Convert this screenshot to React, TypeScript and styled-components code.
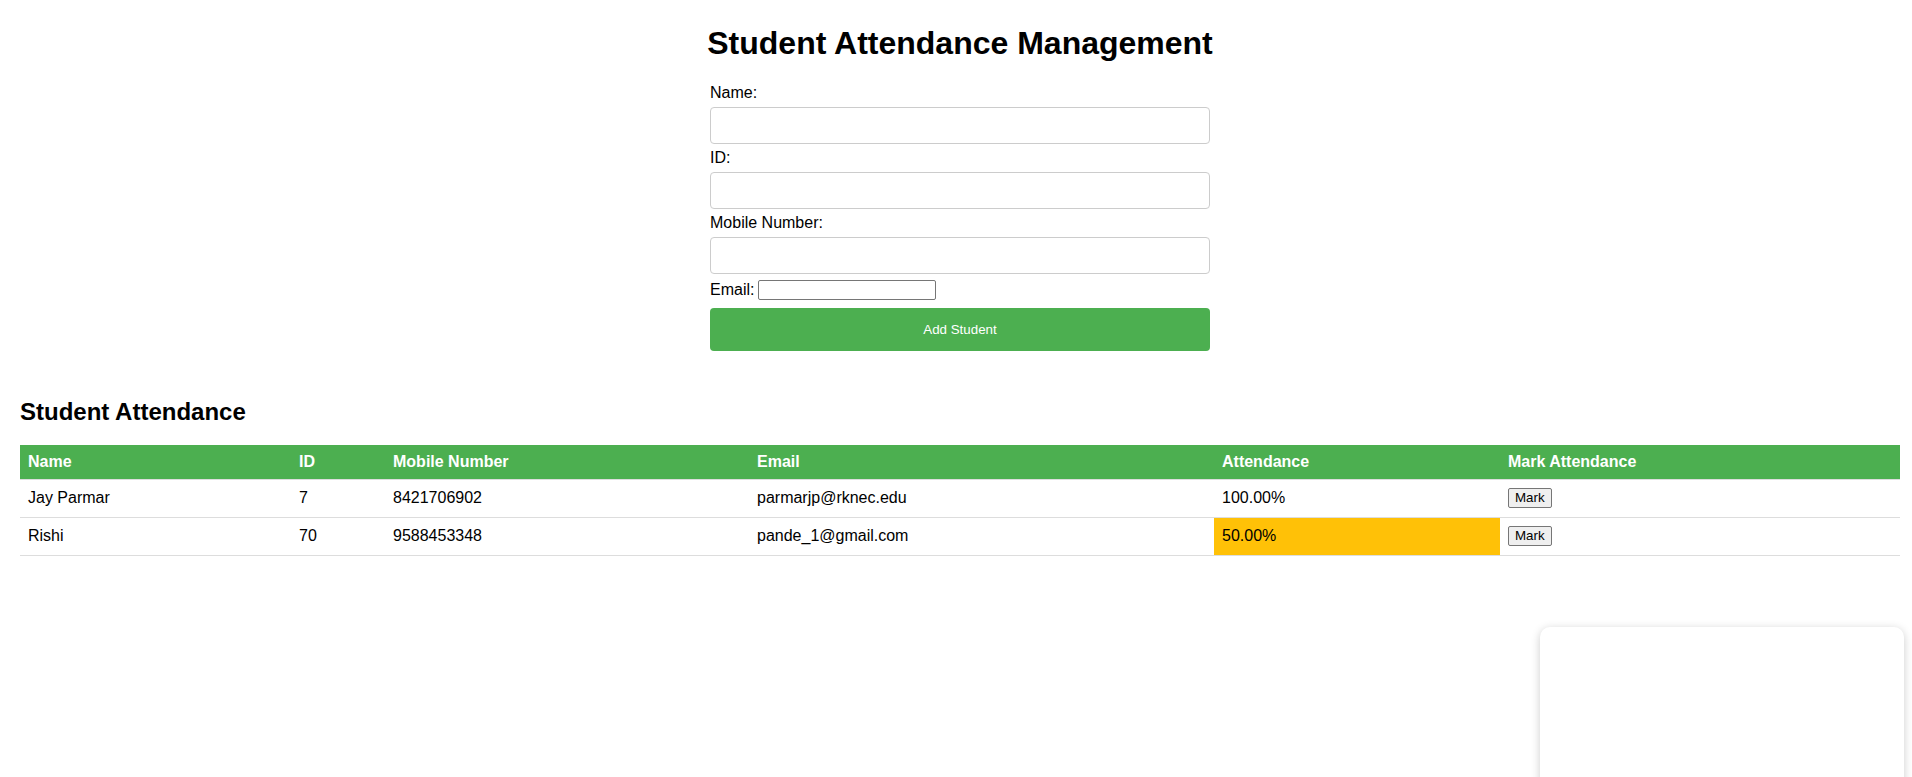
import React from "react";
import styled, { createGlobalStyle } from "styled-components";

const GlobalStyle = createGlobalStyle`
  html, body {
    margin: 0;
    padding: 0;
    overflow: hidden;
    background: #ffffff;
  }
  body {
    font-family: "Liberation Sans", Arial, sans-serif;
    color: #000;
  }
`;

const Page = styled.div`
  width: 1920px;
  box-sizing: border-box;
  padding: 0 20px;
`;

const Title = styled.h1`
  margin: 24.5px 0 22px;
  text-align: center;
  font-size: 32px;
  font-weight: bold;
  line-height: normal;
`;

const Form = styled.form`
  width: 500px;
  margin: 0 auto;
`;

const Label = styled.label`
  display: block;
  font-size: 16px;
  line-height: normal;
`;

const TextInput = styled.input`
  display: block;
  width: 100%;
  box-sizing: border-box;
  margin: 5px 0;
  padding: 10px;
  border: 1px solid #ccc;
  border-radius: 4px;
  font-family: "Liberation Sans", Arial, sans-serif;
  font-size: 13.333px;
  line-height: normal;
  background: #fff;
`;

const InlineRow = styled.div`
  font-size: 16px;
  line-height: normal;
  display: flex;
  align-items: center;
  gap: 4px;
  height: 22px;
`;

const SmallInput = styled.input`
  width: 178px;
  height: 20px;
  box-sizing: border-box;
  padding: 1px 2px;
  border: 1px solid #767676;
  border-radius: 2px;
  font-family: "Liberation Sans", Arial, sans-serif;
  font-size: 13.333px;
  background: #fff;
`;

const SubmitButton = styled.button`
  display: block;
  width: 100%;
  margin: 7px 0 0;
  padding: 14px 20px;
  border: none;
  border-radius: 4px;
  background: #4caf50;
  color: #fff;
  font-family: "Liberation Sans", Arial, sans-serif;
  font-size: 13.333px;
  line-height: normal;
  cursor: pointer;
`;

const SectionTitle = styled.h2`
  margin: 47px 0 19px;
  font-size: 24px;
  font-weight: bold;
  line-height: normal;
`;

const Table = styled.table`
  width: 100%;
  border-collapse: collapse;
  table-layout: fixed;
  font-size: 16px;
`;

const Th = styled.th<{ $w: number }>`
  width: ${(p) => p.$w}px;
  box-sizing: border-box;
  padding: 8px;
  text-align: left;
  background: #4caf50;
  color: #fff;
  font-weight: bold;
  border-bottom: 1px solid #ddd;
  line-height: normal;
`;

const Td = styled.td<{ $warn?: boolean }>`
  padding: 8px;
  text-align: left;
  border-bottom: 1px solid #ddd;
  line-height: normal;
  background: ${(p) => (p.$warn ? "#ffc107" : "transparent")};
`;

const MarkButton = styled.button`
  font-family: "Liberation Sans", Arial, sans-serif;
  font-size: 13.333px;
  line-height: 16px;
  margin: 0 0 1px;
  padding: 1px 6px;
  border: 1px solid #767676;
  border-radius: 2px;
  background: #efefef;
  color: #000;
  vertical-align: baseline;
  cursor: pointer;
`;

const FloatingCard = styled.div`
  position: fixed;
  top: 627px;
  right: 8px;
  width: 364px;
  height: 300px;
  background: #fff;
  border-radius: 10px;
  box-shadow: 0 2px 10px rgba(0, 0, 0, 0.2);
`;

const columns = [
  { label: "Name", w: 271 },
  { label: "ID", w: 94 },
  { label: "Mobile Number", w: 364 },
  { label: "Email", w: 465 },
  { label: "Attendance", w: 286 },
  { label: "Mark Attendance", w: 400 },
];

const students = [
  { name: "Jay Parmar", id: "7", mobile: "8421706902", email: "parmarjp@rknec.edu", attendance: 100 },
  { name: "Rishi", id: "70", mobile: "9588453348", email: "pande_1@gmail.com", attendance: 50 },
];

export default function App() {
  return (
    <>
      <GlobalStyle />
      <Page>
        <Title>Student Attendance Management</Title>
        <Form onSubmit={(e) => e.preventDefault()}>
          <Label htmlFor="name">Name:</Label>
          <TextInput id="name" type="text" />
          <Label htmlFor="sid">ID:</Label>
          <TextInput id="sid" type="text" />
          <Label htmlFor="mobile">Mobile Number:</Label>
          <TextInput id="mobile" type="text" />
          <InlineRow>
            <span>Email:</span>
            <SmallInput type="email" />
          </InlineRow>
          <SubmitButton type="submit">Add Student</SubmitButton>
        </Form>
        <SectionTitle>Student Attendance</SectionTitle>
        <Table>
          <thead>
            <tr>
              {columns.map((c) => (
                <Th key={c.label} $w={c.w}>
                  {c.label}
                </Th>
              ))}
            </tr>
          </thead>
          <tbody>
            {students.map((s) => (
              <tr key={s.id}>
                <Td>{s.name}</Td>
                <Td>{s.id}</Td>
                <Td>{s.mobile}</Td>
                <Td>{s.email}</Td>
                <Td $warn={s.attendance < 75}>{s.attendance.toFixed(2)}%</Td>
                <Td>
                  <MarkButton type="button">Mark</MarkButton>
                </Td>
              </tr>
            ))}
          </tbody>
        </Table>
      </Page>
      <FloatingCard />
    </>
  );
}
